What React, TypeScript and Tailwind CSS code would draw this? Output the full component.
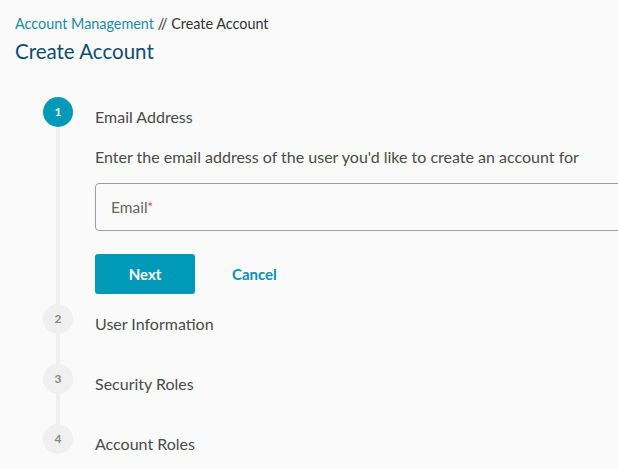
import React from "react";

function Step({ n, label, active }: { n: number; label: string; active?: boolean }) {
  return (
    <div className="flex items-center h-[30px]">
      <div
        className={
          active
            ? "w-[30px] h-[30px] rounded-full bg-[#0099b8] text-white flex items-center justify-center text-[12px] font-bold shrink-0"
            : "w-[30px] h-[30px] rounded-full bg-[#f0f0f0] text-[#8a8a8a] flex items-center justify-center text-[12px] font-bold shrink-0"
        }
      >
        {n}
      </div>
      <div className="ml-[22px] text-[16px] text-[#4a4a4a] mt-[10px]">{label}</div>
    </div>
  );
}

export default function App() {
  return (
    <div
      className="w-[618px] h-[469px] bg-[#fafafa] overflow-hidden relative"
      style={{ fontFamily: "Lato, 'Noto Sans', sans-serif" }}
    >
      <div className="pl-[15px] pt-[15px]">
        <div className="text-[14.4px] leading-[18px]">
          <span className="text-[#1a8aa8]">Account Management</span>
          <span className="text-[#333]"> // Create Account</span>
        </div>
        <div className="text-[20.5px] leading-[26px] text-[#0d4d6f] mt-[5px]">Create Account</div>
      </div>
      <div className="relative ml-[43px] mt-[33px]">
        <div className="absolute left-[13px] top-[15px] w-[4px] h-[330px] bg-[#efefef]" />
        <div className="relative">
          <Step n={1} label="Email Address" active />
          <div className="ml-[52px] mt-[20px]">
            <div className="text-[16px] text-[#4a4a4a] leading-[20px]">
              Enter the email address of the user you'd like to create an account for
            </div>
            <div className="mt-[16px] h-[48px] w-[560px] border border-[#9e9e9e] rounded-[4px] flex items-center pl-[15px] pt-[2px]">
              <span className="text-[15.5px] text-[#666]">Email</span>
              <span className="text-[#e53935] text-[13px] self-start mt-[12px]">*</span>
            </div>
            <div className="mt-[23px] flex items-center">
              <button className="w-[100px] h-[40px] bg-[#0099b8] rounded-[3px] text-white font-bold text-[15px]">
                Next
              </button>
              <button className="ml-[37px] text-[#0a8fae] font-bold text-[15px]">Cancel</button>
            </div>
          </div>
          <div className="mt-[10px] flex flex-col gap-[30px]">
            <Step n={2} label="User Information" />
            <Step n={3} label="Security Roles" />
            <Step n={4} label="Account Roles" />
          </div>
        </div>
      </div>
    </div>
  );
}
